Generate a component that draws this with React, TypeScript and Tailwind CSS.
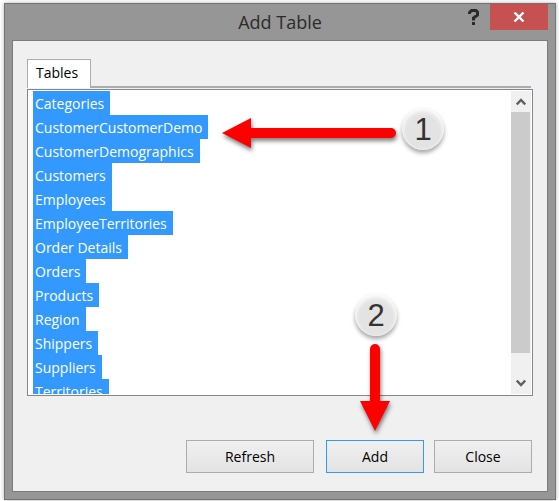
import React, { useState } from "react";

const TABLES = [
  "Categories",
  "CustomerCustomerDemo",
  "CustomerDemographics",
  "Customers",
  "Employees",
  "EmployeeTerritories",
  "Order Details",
  "Orders",
  "Products",
  "Region",
  "Shippers",
  "Suppliers",
  "Territories",
];

function TitleBar() {
  return (
    <header className="relative flex h-9 shrink-0 items-center justify-center">
      <h1 className="text-[18px] leading-6 text-[#2b2b2b]">Add Table</h1>
      <div className="absolute top-0 right-[7px] flex">
        <button type="button" aria-label="Help" className="flex h-[26px] w-8 items-center justify-center">
          <svg width="12" height="16" viewBox="0 0 12 16" fill="none" stroke="#2b2b2b" strokeWidth="3">
            <path d="M1.500 5V3.500L3.500 1.500H8L9.500 3V6L5.500 9V11.500" />
            <path d="M5.500 13V16" />
          </svg>
        </button>
        <button type="button" aria-label="Close window" className="flex h-[26px] w-[58px] items-center justify-center bg-[#c75050]">
          <svg width="12" height="10" viewBox="0 0 12 10" fill="none" stroke="#fff" strokeWidth="2.400">
            <path d="M1.500 0.500L10.500 9.500M10.500 0.500L1.500 9.500" />
          </svg>
        </button>
      </div>
    </header>
  );
}

function TableList() {
  const [selected, setSelected] = useState<string[]>(TABLES);
  const toggle = (name: string) =>
    setSelected((all) => (all.includes(name) ? all.filter((n) => n !== name) : [...all, name]));

  return (
    <div className="mt-px flex h-[307px] border border-[#828790] bg-white p-px">
      <ul className="min-w-0 flex-1 overflow-hidden pl-1">
        {TABLES.map((name) => (
          <li key={name}>
            <label className="relative block h-6 w-fit pt-px pr-1.5 pl-0.5 text-[14px] leading-6 has-checked:bg-[#3399ff] has-checked:text-white">
              <input
                type="checkbox"
                className="absolute inset-0 appearance-none"
                checked={selected.includes(name)}
                onChange={() => toggle(name)}
              />
              {name}
            </label>
          </li>
        ))}
      </ul>
      <div className="flex w-5 flex-col bg-[#f0f0f0]">
        <button type="button" aria-label="Scroll up" className="flex h-[21px] w-[19px] items-center justify-center">
          <svg width="10" height="8" viewBox="0 0 10 8" fill="none" stroke="#606060" strokeWidth="2.400">
            <path d="M0.800 6.500L5 2L9.200 6.500" />
          </svg>
        </button>
        <div className="w-[19px] flex-1 bg-[#cbcbcb]" />
        <button type="button" aria-label="Scroll down" className="flex h-[41px] w-[19px] items-end justify-center pb-[7px]">
          <svg width="10" height="8" viewBox="0 0 10 8" fill="none" stroke="#606060" strokeWidth="2.400">
            <path d="M0.800 1.500L5 6L9.200 1.500" />
          </svg>
        </button>
      </div>
    </div>
  );
}

function Badge({ children }: { children: React.ReactNode }) {
  return (
    <span className="flex size-[42px] items-center justify-center rounded-full bg-[#e3e3e3] font-['Liberation_Sans',sans-serif] text-[31px] leading-none text-[#333] shadow-[inset_0_3px_5px_#fff,inset_0_0_3px_#f4f4f4,0_3px_4px_rgba(0,0,0,0.35)]">
      {children}
    </span>
  );
}

const button =
  "h-[33px] border bg-linear-to-b from-[#f0f0f0] to-[#e3e3e3] text-[14px] leading-6 text-black";

export default function App() {
  return (
    <main className="bg-white px-1 pt-[3px] pb-px pr-[3px] font-['Open_Sans','Noto_Sans',sans-serif]">
      <section className="relative border border-[#737373] bg-[#969696] shadow-[0_0_4px_rgba(0,0,0,0.3)]">
        <TitleBar />
        <div className="mx-[7px] mb-[7px] border border-[#7b7b7b] bg-[#f0f0f0] px-3.5 pt-[18px] pb-[18px]">
          <div className="flex items-end">
            <button type="button" className="h-[29px] w-16 border border-b-0 border-[#acacac] bg-white pr-1 pb-0.5 text-center text-[14px] leading-6">
              Tables
            </button>
            <div className="mr-0.5 h-0.5 flex-1 bg-[#acacac]" />
          </div>
          <TableList />
          <div className="mt-11 mr-px flex justify-end">
            <button type="button" className={`${button} mr-3 w-32 border-[#acacac]`}>Refresh</button>
            <button type="button" className={`${button} mr-2.5 w-[98px] border-[#3399ff]`}>Add</button>
            <button type="button" className={`${button} w-[98px] border-[#acacac]`}>Close</button>
          </div>
        </div>

        <svg width="182" height="40" viewBox="0 0 182 40" fill="red" className="absolute top-[110px] right-[153px] drop-shadow-[1px_3px_2px_rgba(0,0,0,0.5)]">
          <path d="M2 19L31 4V14H171A5 5 0 0 1 171 24H31V34Z" />
        </svg>
        <div className="absolute top-[104px] right-[111px]">
          <Badge>1</Badge>
        </div>
        <div className="absolute top-[290px] right-[158px]">
          <Badge>2</Badge>
        </div>
        <svg width="40" height="92" viewBox="0 0 40 92" fill="red" className="absolute top-[340px] right-[160px] drop-shadow-[1px_3px_2px_rgba(0,0,0,0.5)]">
          <path d="M20 87L5 57H15V5A5 5 0 0 1 25 5V57H35Z" />
        </svg>
      </section>
    </main>
  );
}
